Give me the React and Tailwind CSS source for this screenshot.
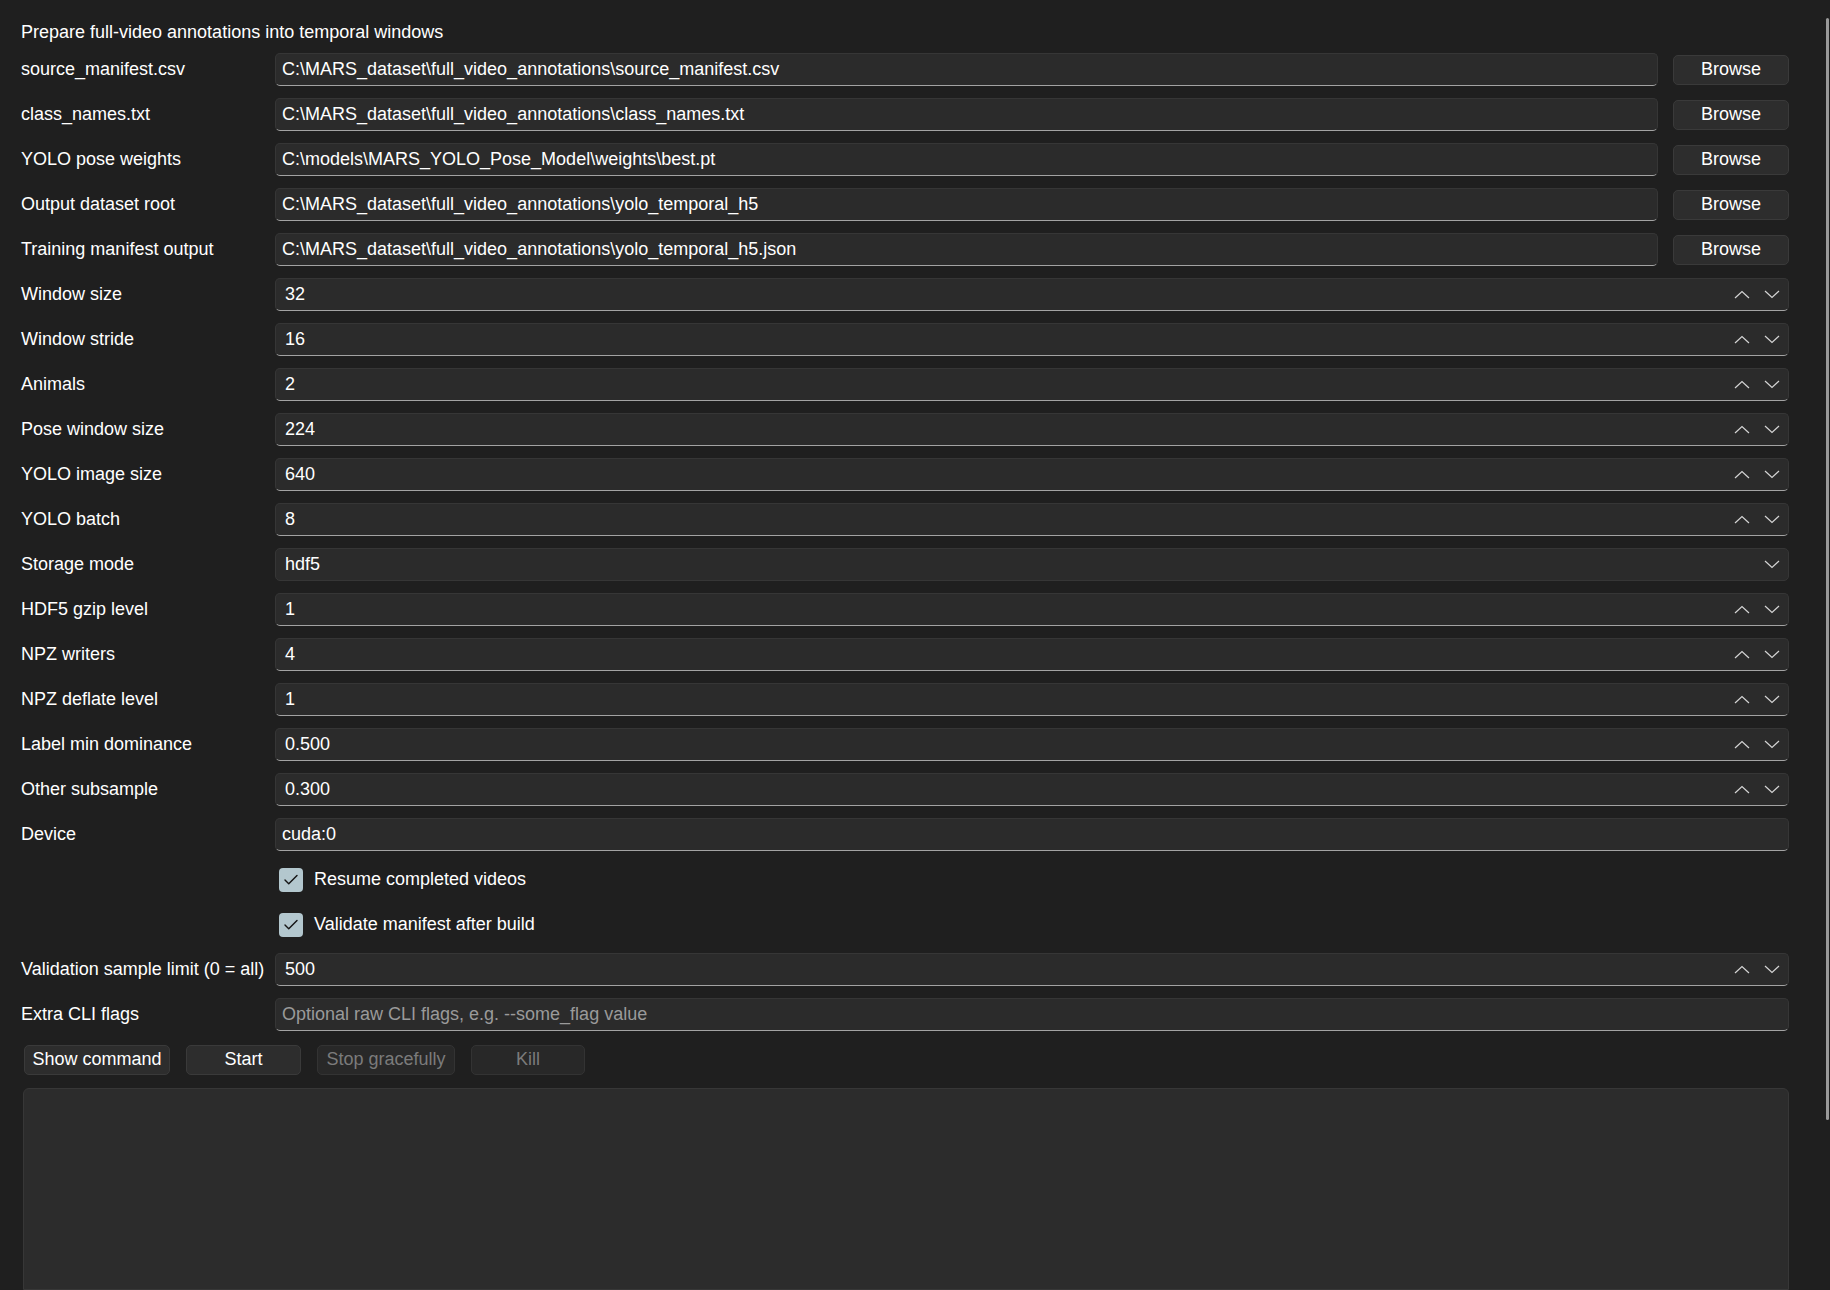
import { Check } from 'lucide-react'

const FONT = { fontFamily: '"Liberation Sans", Arial, sans-serif' }

const PATHS = [
  ['source_manifest.csv', 'C:\\MARS_dataset\\full_video_annotations\\source_manifest.csv'],
  ['class_names.txt', 'C:\\MARS_dataset\\full_video_annotations\\class_names.txt'],
  ['YOLO pose weights', 'C:\\models\\MARS_YOLO_Pose_Model\\weights\\best.pt'],
  ['Output dataset root', 'C:\\MARS_dataset\\full_video_annotations\\yolo_temporal_h5'],
  ['Training manifest output', 'C:\\MARS_dataset\\full_video_annotations\\yolo_temporal_h5.json'],
]

const SPINS_A = [
  ['Window size', '32'],
  ['Window stride', '16'],
  ['Animals', '2'],
  ['Pose window size', '224'],
  ['YOLO image size', '640'],
  ['YOLO batch', '8'],
]

const SPINS_B = [
  ['HDF5 gzip level', '1'],
  ['NPZ writers', '4'],
  ['NPZ deflate level', '1'],
  ['Label min dominance', '0.500'],
  ['Other subsample', '0.300'],
]

function Chevron({ up }) {
  return (
    <svg width="16" height="9" viewBox="0 0 16 9" fill="none">
      <polyline
        points={up ? '1,8 8,1.5 15,8' : '1,1 8,7.5 15,1'}
        stroke="#d4d4d4"
        strokeWidth="1.2"
      />
    </svg>
  )
}

function Row({ label, children }) {
  return (
    <div className="flex h-[33px] items-center">
      <span className="w-[254px] shrink-0 text-[18px] text-white">{label}</span>
      <div className="flex h-full flex-1 items-center">{children}</div>
    </div>
  )
}

function Field({ value, placeholder, className = '' }) {
  return (
    <div
      className={`flex h-full items-center rounded-[5px] border border-[#363636] border-b-[#a3a3a3] bg-[#2b2b2b] px-[6px] text-[18px] ${className}`}
    >
      {value ? (
        <span className="text-white">{value}</span>
      ) : (
        <span className="text-[#9a9a9a]">{placeholder}</span>
      )}
    </div>
  )
}

function Spin({ value }) {
  return (
    <div className="flex h-full flex-1 items-center rounded-[5px] border border-[#363636] border-b-[#a3a3a3] bg-[#2b2b2b] pl-[9px] pr-[8px] text-[18px] text-white">
      <span className="flex-1">{value}</span>
      <div className="flex items-center gap-[14px]">
        <Chevron up />
        <Chevron />
      </div>
    </div>
  )
}

function clsxLite(...parts) {
  return parts.filter(Boolean).join(' ')
}

function Btn({ children, disabled, className = '' }) {
  return (
    <button
      className={clsxLite(
        'flex h-[30px] items-center justify-center rounded-[5px] border text-[18px]',
        disabled
          ? 'border-[#333333] bg-[#282828] text-[#7b7b7b]'
          : 'border-[#3a3a3a] bg-[#2d2d2d] text-white',
        className
      )}
    >
      {children}
    </button>
  )
}

function CheckRow({ label }) {
  return (
    <div className="flex h-[33px] items-center pl-[258px]">
      <span className="flex h-[24px] w-[24px] items-center justify-center rounded-[4px] bg-[#b3c7ce]">
        <Check size={18} strokeWidth={1.9} color="#161616" />
      </span>
      <span className="ml-[11px] text-[18px] text-white">{label}</span>
    </div>
  )
}

export default function App() {
  return (
    <div className="relative h-[1290px] overflow-hidden bg-[#1f1f1f]" style={FONT}>
      <div className="flex h-full flex-col pl-[21px] pr-[41px] pt-[20px]">
        <div className="mb-[9px] flex h-[24px] items-center text-[18px] text-white">
          Prepare full-video annotations into temporal windows
        </div>

        <div className="flex flex-col gap-[12px]">
          {PATHS.map(([label, value]) => (
            <Row key={label} label={label}>
              <Field value={value} className="flex-1" />
              <Btn className="ml-[15px] w-[116px]">Browse</Btn>
            </Row>
          ))}

          {SPINS_A.map(([label, value]) => (
            <Row key={label} label={label}>
              <Spin value={value} />
            </Row>
          ))}

          <Row label="Storage mode">
            <div className="flex h-full flex-1 items-center rounded-[5px] border border-[#363636] bg-[#2b2b2b] pl-[9px] pr-[8px] text-[18px] text-white">
              <span className="flex-1">hdf5</span>
              <Chevron />
            </div>
          </Row>

          {SPINS_B.map(([label, value]) => (
            <Row key={label} label={label}>
              <Spin value={value} />
            </Row>
          ))}

          <Row label="Device">
            <Field value="cuda:0" className="flex-1" />
          </Row>

          <CheckRow label="Resume completed videos" />
          <CheckRow label="Validate manifest after build" />

          <Row label="Validation sample limit (0 = all)">
            <Spin value="500" />
          </Row>

          <Row label="Extra CLI flags">
            <Field placeholder="Optional raw CLI flags, e.g. --some_flag value" className="flex-1" />
          </Row>

          <div className="flex h-[33px] items-center gap-[16px] pl-[3px]">
            <Btn className="w-[146px]">Show command</Btn>
            <Btn className="w-[115px]">Start</Btn>
            <Btn disabled className="w-[138px]">Stop gracefully</Btn>
            <Btn disabled className="w-[114px]">Kill</Btn>
          </div>
        </div>

        <div className="ml-[2px] mt-[12px] h-[260px] rounded-t-[6px] border border-[#373737] bg-[#2c2c2c]" />
      </div>

      {/* scrollbar thumb */}
      <div className="absolute right-[1px] top-[18px] h-[1102px] w-[3px] rounded-full bg-[#9a9a9a]" />
    </div>
  )
}
